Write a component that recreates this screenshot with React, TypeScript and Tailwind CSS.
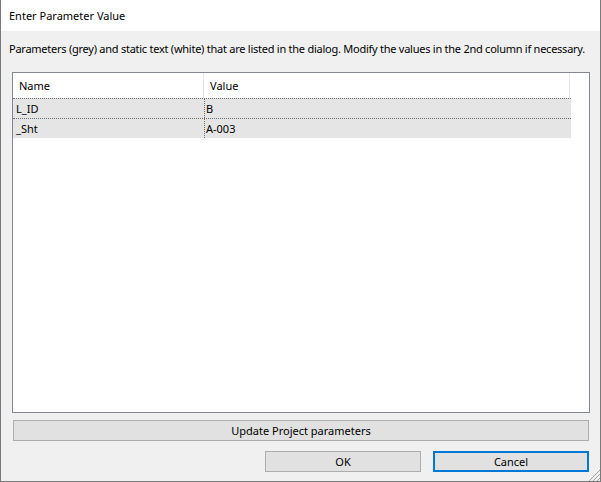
import React from "react";

const rows = [
  { name: "L_ID", value: "B" },
  { name: "_Sht", value: "A-003" },
];

const App = () => {
  return (
    <div
      className="w-[601px] h-[482px] flex flex-col border-x border-b border-[#7a7a7a] text-[11px] text-black leading-[16px]"
      style={{ fontFamily: '"Noto Sans", "Liberation Sans", sans-serif' }}
    >
      {/* title bar */}
      <div className="h-[31px] shrink-0 bg-white pl-[8px] flex items-center">
        <span>Enter Parameter Value</span>
      </div>

      <div className="flex-1 bg-[#f0f0f0] flex flex-col relative">
        <p className="pl-[8px] pt-[10px] whitespace-nowrap tracking-[-0.25px]">
          Parameters (grey) and static text (white) that are listed in the dialog. Modify the
          values in the 2nd column if necessary.
        </p>

        {/* list */}
        <div className="ml-[11px] mt-[15px] w-[578px] h-[341px] border border-[#828790] bg-white flex flex-col">
          <div className="flex h-[25px] shrink-0">
            <div className="w-[191px] pl-[6px] flex items-center border-r border-[#e5e5e5]">Name</div>
            <div className="w-[366px] pl-[6px] flex items-center border-r border-[#e5e5e5]">Value</div>
          </div>
          {rows.map((r) => (
            <div key={r.name} className="flex h-[20px] w-[558px] bg-[#e5e5e5] border-t border-dotted border-[#6d6d6d]">
              <div className="w-[191px] pl-[3px] flex items-center">{r.name}</div>
              <div className="flex-1 pl-[1px] flex items-center border-l border-dotted border-[#6d6d6d]">{r.value}</div>
            </div>
          ))}
        </div>

        <button className="ml-[12px] mt-[7px] w-[576px] h-[21px] bg-[#e1e1e1] border border-[#adadad] flex items-center justify-center">
          Update Project parameters
        </button>

        <div className="mt-[10px] flex justify-end gap-[12px] pr-[11px]">
          <button className="w-[156px] h-[21px] bg-[#e1e1e1] border border-[#adadad] flex items-center justify-center">
            OK
          </button>
          <button className="w-[156px] h-[21px] bg-[#e1e1e1] border-2 border-[#0078d7] flex items-center justify-center">
            Cancel
          </button>
        </div>

        <svg className="absolute right-0 bottom-0" width="11" height="11" viewBox="0 0 11 11">
          {[0, 1, 2, 3, 4, 5, 6, 7, 8, 9, 10].map((i) =>
            [0, 4, 8].map((o) =>
              i + o <= 10 ? (
                <rect key={`${i}-${o}`} x={10 - i} y={i + o} width="1" height="1" fill="#a0a0a0" />
              ) : null
            )
          )}
        </svg>
      </div>
    </div>
  );
};

export default App;
